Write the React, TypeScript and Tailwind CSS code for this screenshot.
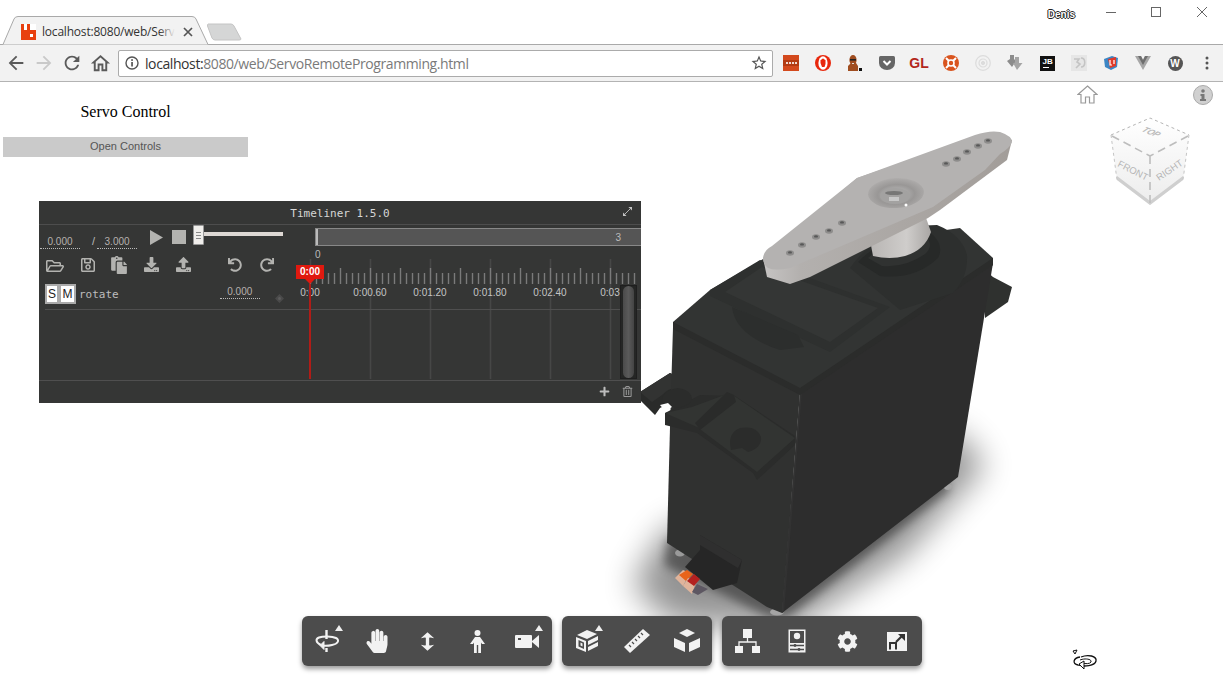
import React from "react";
import { FaRegFolderOpen, FaRegSave, FaPaste, FaDownload, FaUpload, FaUndo, FaRedo, FaPlus, FaRegTrashAlt, FaHandPaper, FaCog } from "react-icons/fa";

const Mat = ({ d, size = 22, fill = "#5a5a5a" }: { d: string; size?: number; fill?: string }) => (
  <svg width={size} height={size} viewBox="0 0 24 24" fill={fill}><path d={d} /></svg>
);

const BACK = "M20 11H7.83l5.59-5.59L12 4l-8 8 8 8 1.41-1.41L7.83 13H20v-2z";
const FWD = "M4 11h12.17l-5.59-5.59L12 4l8 8-8 8-1.41-1.41L16.17 13H4v-2z";
const RELOAD = "M17.65 6.35C16.2 4.9 14.21 4 12 4c-4.42 0-7.99 3.58-7.99 8s3.57 8 7.99 8c3.73 0 6.84-2.55 7.73-6h-2.08c-.82 2.33-3.04 4-5.65 4-3.31 0-6-2.69-6-6s2.69-6 6-6c1.66 0 3.14.69 4.22 1.78L13 11h7V4l-2.35 2.35z";
const HOME = "M12 5.69l5 4.5V18h-2v-6H9v6H7v-7.81l5-4.5M12 3L2 12h3v8h6v-6h2v6h6v-8h3L12 3z";
const STAR = "M22 9.24l-7.19-.62L12 2 9.19 8.63 2 9.24l5.46 4.73L5.82 21 12 17.27 18.18 21l-1.63-7.03L22 9.24zM12 15.4l-3.76 2.27 1-4.28-3.32-2.88 4.38-.38L12 6.1l1.71 4.04 4.38.38-3.32 2.88 1 4.28L12 15.4z";

function TabStrip() {
  return (
    <div className="h-[45px] border-b border-[#a9a9a9] flex items-end relative bg-white shrink-0">
      <div className="relative w-[211px] h-[29px] -mb-px flex items-center pl-[21px] pt-[2px]">
        <svg className="absolute inset-0" width="211" height="29" viewBox="0 0 211 29">
          <path d="M0 28.5 H3 L14 3 Q15 0.5 18 0.5 H192 Q195 0.5 196 3 L208 28.5 H211" fill="#f2f2f2" stroke="#a9a9a9" />
        </svg>
        <svg className="relative shrink-0" width="15" height="16" viewBox="0 0 15 16">
          <rect width="15" height="16" fill="#e8400f" />
          <rect x="3" y="0" width="3" height="6" fill="#fff" />
          <rect x="9" y="0" width="6" height="6" fill="#fff" />
          <rect x="9" y="10" width="3" height="3" fill="#fff" />
        </svg>
        <div className="relative ml-[6px] w-[133px] overflow-hidden whitespace-nowrap text-[12px] text-[#333] [font-family:'Open_Sans',sans-serif] tracking-[-0.2px]">
          localhost:8080/web/Servo
          <div className="absolute right-0 top-0 bottom-0 w-[16px] bg-gradient-to-r from-transparent to-[#f2f2f2]" />
        </div>
        <svg className="relative ml-[8px]" width="10" height="10" viewBox="0 0 10 10"><path d="M1 1L9 9M9 1L1 9" stroke="#555" strokeWidth="1.7" /></svg>
      </div>
      <svg className="-ml-[4px] mb-[3px]" width="36" height="18" viewBox="0 0 36 18">
        <path d="M1 1 H24 Q26 1 27 3 L34 16 Q34 17 32 17 H8 Q6 17 5 15 L0.5 3 Q0.5 1 1 1Z" fill="#d5d6d6" stroke="#c4c4c4" />
      </svg>
      <div className="absolute right-0 top-0 flex items-start">
        <span className="absolute right-[148px] top-[7px] text-[10px] font-bold text-white [font-family:'Liberation_Sans',sans-serif] [text-shadow:1px_0_0_#222,-1px_0_0_#222,0_1px_0_#222,0_-1px_0_#222]">Denis</span>
        <svg width="165" height="24" viewBox="0 0 165 24" fill="none" stroke="#666">
          <path d="M48 12.5 H58" />
          <rect x="93.5" y="7.5" width="9" height="9" />
          <path d="M139 7 L149 17 M149 7 L139 17" />
        </svg>
      </div>
    </div>
  );
}

function Extensions() {
  const items: React.ReactNode[] = [
    <svg width="16" height="16" viewBox="0 0 16 16"><rect width="16" height="16" fill="#d3491d" /><rect y="5" width="16" height="6" fill="#b33a12" /><circle cx="4" cy="8" r="1.1" fill="#fff" /><circle cx="7" cy="8" r="1.1" fill="#fff" /><circle cx="10" cy="8" r="1.1" fill="#fff" /><circle cx="13" cy="8" r="1.1" fill="#fff" /></svg>,
    <svg width="16" height="16" viewBox="0 0 16 16"><circle cx="8" cy="8" r="8" fill="#e8280d" /><ellipse cx="8" cy="8" rx="4.6" ry="6.8" fill="#fff" /><path d="M5.5 8V5h1V4h1v-.5h1V4h1v1h1v4l-1 3H7z" fill="#e8280d" /></svg>,
    <svg width="14" height="16" viewBox="0 0 14 16"><ellipse cx="5" cy="5" rx="3.6" ry="5" fill="#a04d20" /><path d="M0 16V11L3 8H8L10 11V16Z" fill="#a04d20" /><rect x="2" y="4" width="6" height="1.6" fill="#222" /><rect x="4" y="8" width="2" height="1" fill="#ddd" /><rect x="11" y="13" width="3" height="3" fill="#111" /></svg>,
    <svg width="16" height="14" viewBox="0 0 16 14"><path d="M0 1.5Q0 0 1.5 0H14.5Q16 0 16 1.5V7A8 7 0 0 1 0 7Z" fill="#666" /><path d="M4.5 5L8 8.5 11.5 5" stroke="#fff" strokeWidth="2" fill="none" /></svg>,
    <span className="text-[14px] leading-none font-bold text-[#b3261c] [font-family:'Liberation_Sans',sans-serif]">GL</span>,
    <svg width="16" height="16" viewBox="0 0 16 16"><circle cx="8" cy="8" r="8" fill="#d9541e" /><circle cx="8" cy="8" r="3" fill="none" stroke="#fff" strokeWidth="1.6" /><path d="M3 3L6 6M13 3L10 6M3 13L6 10M13 13L10 10" stroke="#fff" strokeWidth="2" /></svg>,
    <svg width="16" height="16" viewBox="0 0 16 16" fill="none" stroke="#dcdcdc"><circle cx="8" cy="8" r="7.3" strokeWidth="1.2" /><circle cx="8" cy="8" r="4" strokeWidth="1.2" /><circle cx="8" cy="8" r="1.6" fill="#dcdcdc" /></svg>,
    <svg width="16" height="16" viewBox="0 0 16 16" fill="#8c8c8c"><path d="M0 6L3 4V0H7V4L9 6 5 12Z" /><path d="M6 8H8V2H12V8H15.5L10 15Z" fill="#a5a5a5" /></svg>,
    <div className="w-[15px] h-[15px] bg-[#111] text-white text-[8px] leading-[9px] font-bold pl-[3px] pt-[1px] [font-family:'Liberation_Sans',sans-serif]">JB<div className="w-[6px] h-px bg-white mt-[1px]" /></div>,
    <svg width="16" height="16" viewBox="0 0 16 16"><rect width="16" height="16" fill="#e6e6e6" /><path d="M3 4H8L6 7 9 9 5 13M10 3C15 3 15 12 10 12" fill="none" stroke="#c4c4c4" strokeWidth="1.6" /></svg>,
    <svg width="16" height="16" viewBox="0 0 16 16"><path d="M1 4L9 1 15 3 14 12 8 15 2 12Z" fill="#3d86c4" /><path d="M5 4L13 2 13 11 7 13Z" fill="#e03a2a" /><path d="M7 5V10H9M11 5V9" stroke="#fff" strokeWidth="1.2" fill="none" /></svg>,
    <svg width="16" height="14" viewBox="0 0 16 14"><path d="M0 0H6L8 4 10 0H16L8 14Z" fill="#a7a7a7" /><path d="M3 0H6L8 4 10 0H13L8 9Z" fill="#6f6f6f" /></svg>,
    <div className="w-[15px] h-[15px] rounded-full bg-[#555] text-white text-[10px] leading-[15px] text-center font-bold [font-family:'Liberation_Sans',sans-serif]">W</div>,
  ];
  return (
    <div className="flex items-center ml-[2px]">
      {items.map((it, i) => (
        <div key={i} className="w-[32px] h-[20px] flex items-center justify-center">{it}</div>
      ))}
      <svg className="ml-[14px]" width="4" height="14" viewBox="0 0 4 14" fill="#555"><circle cx="2" cy="2" r="1.5" /><circle cx="2" cy="7" r="1.5" /><circle cx="2" cy="12" r="1.5" /></svg>
    </div>
  );
}

function Toolbar() {
  return (
    <div className="h-[37px] bg-[#f2f2f2] border-b border-[#b3b3b3] flex items-center shrink-0">
      <div className="flex items-center w-[118px] pl-[5px]">
        <div className="w-[28px] flex justify-center -ml-[3px]"><Mat d={BACK} /></div>
        <div className="w-[28px] flex justify-center"><Mat d={FWD} fill="#c9c9c9" /></div>
        <div className="w-[28px] flex justify-center"><Mat d={RELOAD} /></div>
        <div className="w-[28px] flex justify-center"><Mat d={HOME} size={23} /></div>
      </div>
      <div className="w-[655px] h-[27px] bg-white border border-[#ababab] rounded-[2px] flex items-center pl-[6px] pr-[4px]">
        <svg width="14" height="14" viewBox="0 0 14 14" fill="none"><circle cx="7" cy="7" r="6" stroke="#555" strokeWidth="1.4" /><rect x="6.2" y="6" width="1.7" height="4.5" fill="#555" /><rect x="6.2" y="3.2" width="1.7" height="1.7" fill="#555" /></svg>
        <span className="ml-[6px] text-[14px] text-[#7a7a7a] whitespace-nowrap [font-family:'Open_Sans',sans-serif] tracking-[-0.41px]"><span className="text-[#333]">localhost:</span>8080/web/ServoRemoteProgramming.html</span>
        <div className="ml-auto"><Mat d={STAR} size={18} fill="#555" /></div>
      </div>
      <Extensions />
    </div>
  );
}

function Model() {
  return (
    <svg className="absolute inset-0" width="1223" height="593" viewBox="0 82 1223 593">
      <defs>
        <filter id="blur1" x="-30%" y="-30%" width="160%" height="160%"><feGaussianBlur stdDeviation="16" /></filter>
        <filter id="blur2" x="-30%" y="-30%" width="160%" height="160%"><feGaussianBlur stdDeviation="5" /></filter>
        <linearGradient id="hornSide" x1="0" x2="1" y1="0" y2="0">
          <stop offset="0" stopColor="#c6c4c3" /><stop offset="0.15" stopColor="#b3b0ae" /><stop offset="1" stopColor="#a29d99" />
        </linearGradient>
        <radialGradient id="hole" cx="0.5" cy="0.55" r="0.55">
          <stop offset="0" stopColor="#c4c4c4" /><stop offset="0.6" stopColor="#999796" /><stop offset="0.9" stopColor="#a9a7a6" /><stop offset="1" stopColor="#b0aead" />
        </radialGradient>
        <linearGradient id="neck" x1="0" x2="1" y1="0" y2="0">
          <stop offset="0" stopColor="#b8b5b3" /><stop offset="0.6" stopColor="#cfcdcb" /><stop offset="1" stopColor="#a9a6a4" />
        </linearGradient>
      </defs>
      {/* ground shadow */}
      <path d="M665 530 L632 585 L670 622 L790 630 L905 555 L985 465 L955 430 Z" fill="#000" opacity="0.42" filter="url(#blur1)" />
      <path d="M667 540 L664 565 L770 618 L790 616 L950 490 L940 470 Z" fill="#000" opacity="0.4" filter="url(#blur2)" />
      {/* feet */}
      <ellipse cx="680" cy="553" rx="5" ry="3.5" fill="#9a9a9a" />
      <ellipse cx="777" cy="612" rx="7" ry="3.5" fill="#a5a5a5" />
      <ellipse cx="948" cy="487" rx="4" ry="3" fill="#a5a5a5" />
      {/* right flange */}
      <path d="M985 270 L993 277 L1012 287 L1008 302 L985 318 Z" fill="#2f312f" />
      {/* left flange A */}
      <path d="M670 373 L640 392 L640 400 L655 415 L660 408 L668 404 Q680 414 692 402 L705 390 Z" fill="#2a2b2a" />
      <path d="M670 373 L640 392 L652 402 L662 395 Q672 384 685 390 Q692 394 692 400 L705 390 Z" fill="#323332" />
      {/* left face */}
      <path d="M673 327 L800 393 L782 613 L767 607 L667 543 L670 427 Z" fill="#303130" />
      {/* right face */}
      <path d="M800 393 L993 263 L958 477 L782 613 Z" fill="#2d2d2d" />
      <path d="M800 393 L782 613 L784 612 L802 392 Z" fill="#323232" />
      {/* top */}
      <path d="M673 322 L710 290 L770 255 L960 228 L993 258 L993 265 L800 393 L673 327 Z" fill="#323433" />
      <path d="M673 322 L800 388 L993 258 L993 265 L800 395 L673 329 Z" fill="#2b2c2b" />
      {/* recess */}
      <path d="M710 290 L760 260 L890 307 L830 352 L710 296 Z" fill="#2e302f" />
      <path d="M725 292 L762 267 L878 308 L830 342 Z" fill="#343635" />
      <path d="M732 307 Q735 335 780 350 L804 347 L798 335 Z" fill="#2c2e2d" />
      {/* turret */}
      <path d="M850 268 Q880 225 937 225 Q962 235 967 255 Q968 278 953 293 L900 310 Z" fill="#2d2f2e" />
      <path d="M858 262 Q880 238 930 232 Q945 245 938 258 Q915 280 880 276 Z" fill="#272928" />
      <path d="M868 258 Q890 240 925 236 Q935 245 925 254 Q905 268 882 266 Z" fill="#303231" />
      <path d="M873 256 L870 240 L925 215 L931 232 Q925 250 905 256 Q890 260 873 256 Z" fill="url(#neck)" />
      {/* left flange B */}
      <path d="M665 413 L665 425 L697 433 L753 473 L757 480 L795 445 L795 436 L735 396 L700 395 Z" fill="#2b2c2b" />
      <path d="M665 413 L692 407 L730 393 L795 438 L757 472 L697 427 Z" fill="#323432" />
      <path d="M695 423 L727 392 L734 395 L736 402 L700 430 Z" fill="#2a2b2a" />
      <path d="M731 450 Q727 433 740 428 Q757 425 761 437 Q762 448 748 452 L742 448 Z" fill="#2b2c2b" />
      <path d="M662 402 Q662 390 678 388 Q692 390 692 400 Q686 408 675 408 Z" fill="#2b2c2b" />
      <path d="M660 405 L668 403 L672 407 L665 411 Z" fill="#ffffff" />
      {/* connector */}
      <path d="M700 535 L742 560 L737 583 L713 590 L685 567 L700 550 Z" fill="#262626" />
      <path d="M700 535 L742 560 L738 568 L700 545 Z" fill="#2f2f2f" />
      <path d="M675 578 L683 570 L690 573 L683 586 Z" fill="#e0b49b" />
      <path d="M679 575 L687 570 L693 574 L686 581 Z" fill="#e8641a" />
      <path d="M683 586 L688 578 L696 582 L692 594 Z" fill="#e0b49b" />
      <path d="M687 581 L694 574 L700 579 L694 586 Z" fill="#b3201f" />
      <path d="M692 592 L697 584 L708 589 L698 595 Z" fill="#5d5762" />
      {/* horn */}
      <path d="M763 258 L767 277 L790 284 L810 277 L928 218 L940 210 L1007 160 L1012 140 L993 132 L857 178 Z" fill="url(#hornSide)" />
      <path d="M763 258 Q764 250 772 246 L857 178 L975 135 Q990 130 1000 132 Q1012 136 1012 142 Q1010 148 1000 154 L985 170 L933 207 L790 268 Q775 271 768 268 Q763 264 763 258 Z" fill="#b4b2b1" />
      <ellipse cx="896" cy="193" rx="28" ry="15" transform="rotate(-3 896 193)" fill="url(#hole)" />
      <ellipse cx="895" cy="196" rx="15" ry="8" fill="#a3a2a1" />
      <ellipse cx="894" cy="193" rx="9" ry="2" fill="#5a5a5a" opacity="0.6" />
      <rect x="889" y="197" width="10" height="4" fill="#c8c8c8" />
      <circle cx="906" cy="205" r="1.5" fill="#fff" />
      {[[790, 253], [802, 245], [816, 237], [829, 231], [842, 223], [946, 164], [957, 159], [967, 152], [978, 146], [988, 141]].map(([x, y], i) => (
        <g key={i}>
          <ellipse cx={x} cy={y} rx="4" ry="2.8" fill="#8e8d8c" />
          <ellipse cx={x} cy={y - 0.6} rx="2" ry="1.2" fill="#585858" />
        </g>
      ))}
    </svg>
  );
}

function ViewCube() {
  return (
    <svg className="absolute right-[28px] top-[33px]" width="90" height="95" viewBox="1105 115 90 95">
      <defs>
        <linearGradient id="cf" x1="0" y1="0" x2="0" y2="1"><stop offset="0" stopColor="#ffffff" /><stop offset="1" stopColor="#ececec" /></linearGradient>
      </defs>
      <path d="M1111 135 L1150 118 L1189 135 L1183 180 L1150 205 L1117 180 Z" fill="url(#cf)" />
      <path d="M1117 180 L1150 205 L1183 180 L1183 176 L1150 201 L1117 176Z" fill="#cfcfcf" />
      <path d="M1111 135 L1150 118 L1189 135" fill="none" stroke="#b5b5b5" strokeDasharray="3 3" />
      <path d="M1111 135 L1117 180 M1189 135 L1183 180" fill="none" stroke="#c5c5c5" strokeDasharray="3 3" />
      <path d="M1112 136 L1150 156 L1188 136 M1150 156 V205" fill="none" stroke="#bdbdbd" strokeWidth="1.6" strokeDasharray="8 5" />
      <text transform="translate(1141 131) rotate(22) skewX(-25)" fontSize="8.5" fontWeight="bold" fontStyle="italic" fill="#bbb" fontFamily="Liberation Sans">TOP</text>
      <text transform="translate(1117 166) rotate(27)" fontSize="9.5" fill="#b5b5b5" fontFamily="Liberation Sans">FRONT</text>
      <text transform="translate(1159 181) rotate(-34)" fontSize="9.5" fill="#b5b5b5" fontFamily="Liberation Sans">RIGHT</text>
    </svg>
  );
}

const Num = ({ v, className = "" }: { v: string; className?: string }) => (
  <div className={"w-[40px] text-center border-b border-dotted border-[#bbb] text-[10px] leading-[12px] text-[#b5b0ad] [font-family:'Liberation_Sans',sans-serif] " + className}>{v}</div>
);

function Timeliner() {
  const ticks = Array.from({ length: 55 }, (_, i) => 14 + i * 6);
  const labels: [string, number][] = [["0:00", 14], ["0:00.60", 74], ["0:01.20", 134], ["0:01.80", 194], ["0:02.40", 254], ["0:03", 314]];
  return (
    <div className="absolute left-[39px] top-[119px] w-[602px] h-[202px] bg-[#353635] flex flex-col text-[#bbb]">
      <div className="h-[24px] border-b border-[#4d4d4d] relative flex items-center justify-center pt-[4px] shrink-0">
        <span className="text-[11px] text-[#d6d6d6] [font-family:'DejaVu_Sans_Mono',monospace]">Timeliner 1.5.0</span>
        <svg className="absolute right-[9px] top-[6px]" width="9" height="9" viewBox="0 0 10 10" fill="none" stroke="#c4c4c4"><path d="M2 8L8 2" /><path d="M6 0H10V4Z" fill="#c4c4c4" stroke="none" /><path d="M0 6V10H4Z" fill="#c4c4c4" stroke="none" /></svg>
      </div>
      <div className="h-[155px] flex shrink-0">
        <div className="w-[257px] shrink-0 flex flex-col">
          <div className="h-[25px] flex items-start pl-[1px] relative">
            <Num v="0.000" className="mt-[11px]" />
            <span className="ml-[12px] mt-[10px] text-[11px] leading-[12px] text-[#bbb] [font-family:'Liberation_Sans',sans-serif]">/</span>
            <Num v="3.000" className="ml-[2px] mt-[11px]" />
            <svg className="ml-[13px] mt-[5px]" width="13" height="15" viewBox="0 0 13 15" fill="#b3b3b0"><path d="M0 0L13 7.5 0 15Z" /></svg>
            <div className="ml-[9px] mt-[5px] w-[14px] h-[14px] bg-[#b3b3b0]" />
            <div className="ml-[7px] w-[11px] h-[20px] bg-[#f0eeeb] border border-[#999] rounded-[1px] flex flex-col gap-[2px] items-center justify-center">
              <div className="w-[5px] h-px bg-[#888]" /><div className="w-[5px] h-px bg-[#888]" /><div className="w-[5px] h-px bg-[#888]" />
            </div>
            <div className="w-[79px] h-[4px] mt-[7px] bg-[#ddd8d4]" />
          </div>
          <div className="h-[34px] pt-[7px] pl-[7px] flex items-start text-[#b3b3b0]">
            <div className="w-[32px]"><FaRegFolderOpen size={18} /></div>
            <div className="w-[32px] pl-[2px]"><FaRegSave size={16} /></div>
            <div className="w-[32px]"><FaPaste size={18} className="-mt-[1px]" /></div>
            <div className="w-[32px] pl-[2px]"><FaDownload size={15} /></div>
            <div className="w-[52px] pl-[2px]"><FaUpload size={15} /></div>
            <div className="w-[32px] pl-[2px]"><FaUndo size={14} className="mt-[1px]" /></div>
            <div className="pl-[2px]"><FaRedo size={14} className="mt-[1px]" /></div>
          </div>
          <div className="h-[26px] ml-[6px] border-b border-[#4f4f4f] flex items-start">
            <div className="w-[14px] h-[20px] bg-white border-2 border-[#aaa] text-[#222] text-[12px] leading-[16px] text-center [font-family:'Liberation_Sans',sans-serif]">S</div>
            <div className="w-[17px] h-[20px] bg-white border-2 border-[#aaa] text-[#222] text-[12px] leading-[16px] text-center [font-family:'Liberation_Sans',sans-serif]">M</div>
            <span className="ml-[3px] mt-[4px] text-[11px] leading-[14px] text-[#bdbdbd] [font-family:'DejaVu_Sans_Mono',monospace]">rotate</span>
            <Num v="0.000" className="ml-[101px] mt-[2px]" />
            <svg className="ml-[15px] mt-[10px]" width="9" height="9" viewBox="0 0 9 9"><path d="M4.5 0L9 4.5 4.5 9 0 4.5Z" fill="#4a4a4a" /><circle cx="4.5" cy="4.5" r="1.5" fill="#5d5d5d" /></svg>
          </div>
          <div className="flex-1" />
        </div>
        <div className="flex-1 relative">
          <svg className="absolute inset-0" width="345" height="155" viewBox="0 0 345 155">
            {[74, 134, 194, 254, 314].map((x) => (
              <line key={x} x1={x + 0.5} x2={x + 0.5} y1="34" y2="154" stroke="#464746" strokeWidth="1.6" />
            ))}
            <line x1="14.5" x2="14.5" y1="34" y2="44" stroke="#484948" strokeWidth="1.6" />
            {ticks.map((x, i) => (
              <line key={x} x1={x + 0.5} x2={x + 0.5} y1={i % 5 === 0 ? 43 : 48} y2="59" stroke="#7a7a7a" strokeWidth="1.4" />
            ))}
            <line x1="0" x2="345" y1="84.5" y2="84.5" stroke="#4f4f4f" />
          </svg>
          <div className="absolute left-[19px] right-0 top-[3px] h-[18px] bg-[#555] border-y border-l border-[#888] text-[10px] text-[#bbb] [font-family:'Liberation_Sans',sans-serif]">
            <div className="absolute left-0 top-0 bottom-0 w-[2px] bg-[#bbb]" />
            <span className="absolute right-[20px] top-[2px] leading-[14px]">3</span>
          </div>
          <span className="absolute left-[19px] top-[24px] text-[10px] leading-[12px] text-[#bbb] [font-family:'Liberation_Sans',sans-serif]">0</span>
          {labels.map(([t, x]) => (
            <span key={t} className="absolute top-[62px] -translate-x-1/2 text-[10px] leading-[12px] text-[#c4c4c4] [font-family:'Liberation_Sans',sans-serif]" style={{ left: x }}>{t}</span>
          ))}
          <div className="absolute left-[13px] top-[59px] w-[2px] h-[95px] bg-[#b01c17]" />
          <div className="absolute left-0 top-[40px] w-[28px] h-[14px] bg-[#e0190f] text-white text-[10px] font-bold leading-[14px] text-center [font-family:'Liberation_Sans',sans-serif]">0:00</div>
          <div className="absolute left-[9px] top-[54px] w-0 h-0 border-x-[5px] border-x-transparent border-t-[5px] border-t-[#e0190f]" />
          <div className="absolute left-[324px] top-[60px] w-[17px] h-[94px] bg-[#252625] border border-[#1f1f1f] flex justify-center">
            <div className="w-[11px] h-full rounded-full bg-gradient-to-r from-[#4a4a4a] via-[#5a5a5a] to-[#444]" />
          </div>
        </div>
      </div>
      <div className="flex-1 border-t border-[#4f4f4f] flex items-center justify-end pr-[8px] pb-[2px] gap-[12px] text-[#bdbdbd]">
        <FaPlus size={11} />
        <FaRegTrashAlt size={11} className="text-[#999]" />
      </div>
    </div>
  );
}

const Caret = () => <div className="absolute right-[9px] top-[9px] w-0 h-0 border-x-[4px] border-x-transparent border-b-[6px] border-b-[#eee]" />;

function Btn({ children, caret }: { children: React.ReactNode; caret?: boolean }) {
  return (
    <div className="w-[50px] h-[50px] relative flex items-center justify-center text-[#f2f2f2]">
      {children}
      {caret && <Caret />}
    </div>
  );
}

function BottomBar() {
  const group = "h-[50px] bg-[#4c4c4c] rounded-[6px] flex shadow-[0_3px_5px_rgba(0,0,0,0.4)]";
  return (
    <div className="absolute left-[302px] bottom-[9px] flex gap-[10px]">
      <div className={group}>
        <Btn caret>
          <svg width="26" height="26" viewBox="0 0 26 26" fill="none" stroke="#f2f2f2"><path d="M12.5 2V11M12.5 20V24" strokeWidth="2.4" /><path d="M7 17C2 15 1 11 5 9.5 9 8 18 8 22 10 26 12 24 16 18 17 14 18 11 18 8 17.5" strokeWidth="2" /><path d="M10 13.5L6 17.5 10 21.5Z" fill="#f2f2f2" /></svg>
        </Btn>
        <Btn><FaHandPaper size={24} /></Btn>
        <Btn>
          <svg width="15" height="19" viewBox="0 0 18 22" fill="#f2f2f2"><path d="M9 0L17 7Q12 6 11 6.5V15.5Q12 16 17 15L9 22 1 15Q6 16 7 15.5V6.5Q6 6 1 7Z" /></svg>
        </Btn>
        <Btn>
          <svg width="15" height="23" viewBox="0 0 15 23" fill="#f2f2f2"><circle cx="7.5" cy="3" r="3" /><path d="M5 7H10L15 14H12L11 12.5V23H8.2V15H6.8V23H4V12.5L3 14H0Z" /></svg>
        </Btn>
        <Btn caret>
          <svg width="24" height="13" viewBox="0 0 24 13" fill="#f2f2f2"><rect width="17" height="13" rx="1" /><rect x="3" y="3" width="3" height="2" fill="#4c4c4c" /><path d="M17 6L24 0V13L17 7Z" /></svg>
        </Btn>
      </div>
      <div className={group}>
        <Btn caret>
          <svg width="22" height="24" viewBox="0 0 22 24" fill="#f2f2f2"><path d="M11 1L21 5 11 10 1 6Z" /><path d="M0 8L10 12V23L0 19ZM2.5 11V17.5L8 20V13.5ZM4.5 13.5L6.5 14.5V17.5L4.5 16.5Z" fillRule="evenodd" /><path d="M12 12L22 7V11L12 16ZM12 18L22 13V17L12 22Z" /></svg>
        </Btn>
        <Btn>
          <svg width="26" height="24" viewBox="0 0 26 24"><path d="M19 0L26 6 6 24 0 18Z" fill="#f2f2f2" /><path d="M17 4L19 6M14 7L16 9M11 10L13 12M8 13L10 15M5 16L7 18" stroke="#4c4c4c" strokeWidth="1.2" /></svg>
        </Btn>
        <Btn>
          <svg width="26" height="24" viewBox="0 0 26 24" fill="#f2f2f2"><path d="M13 0L21 4 13 8 5 4Z" /><path d="M0 9L11 14V23L0 18ZM26 9L15 14V23L26 18Z" /></svg>
        </Btn>
      </div>
      <div className={group}>
        <Btn>
          <svg width="25" height="24" viewBox="0 0 25 24" fill="#f2f2f2"><rect x="8" y="0" width="9" height="9" /><path d="M12.5 9V13M4 18V13H21V18" stroke="#f2f2f2" fill="none" strokeWidth="1.3" /><rect x="0" y="17" width="8" height="7" /><rect x="17" y="17" width="8" height="7" /></svg>
        </Btn>
        <Btn>
          <svg width="18" height="24" viewBox="0 0 18 24"><rect x="0.5" y="0.5" width="17" height="23" fill="#f2f2f2" /><rect x="2" y="2" width="14" height="12" fill="#4c4c4c" /><circle cx="9" cy="7" r="3.2" fill="#f2f2f2" /><path d="M2 16.5H16M2 20.5H16" stroke="#4c4c4c" strokeWidth="1.5" /><circle cx="7" cy="16.5" r="1.4" fill="#4c4c4c" /><circle cx="11" cy="20.5" r="1.4" fill="#4c4c4c" /></svg>
        </Btn>
        <Btn><FaCog size={21} /></Btn>
        <Btn>
          <svg width="20" height="19" viewBox="0 0 20 19"><rect width="20" height="19" fill="#f2f2f2" /><path d="M3 17.5V11H9V17.5" fill="none" stroke="#333" strokeWidth="2" /><path d="M9 10L15 4" stroke="#333" strokeWidth="2.2" /><path d="M11 2H18V9Z" fill="#333" /></svg>
        </Btn>
      </div>
    </div>
  );
}

export default function App() {
  return (
    <div className="w-[1223px] h-[675px] overflow-hidden bg-white flex flex-col">
      <TabStrip />
      <Toolbar />
      <div className="flex-1 relative">
        <Model />
        <div className="relative w-[245px] ml-[3px]">
          <div className="pt-[20px] h-[55px] text-center text-[16px] leading-[19px] text-black [font-family:'Liberation_Serif',serif]">Servo Control</div>
          <div className="h-[20px] bg-[#cacaca] text-center text-[11px] leading-[19px] text-[#555] [font-family:'Liberation_Sans',sans-serif]">Open Controls</div>
        </div>
        <div className="absolute left-[1077px] top-[3px]">
          <svg width="21" height="19" viewBox="0 0 21 19" fill="#fff" stroke="#999" strokeWidth="1.2"><path d="M10.5 1L20 9.5H17V18H12.5V12H8.5V18H4V9.5H1Z" /></svg>
        </div>
        <div className="absolute left-[1193px] top-[3px] w-[20px] h-[20px] rounded-full bg-[#d0d0d0] border border-[#aaa] flex items-center justify-center">
          <svg width="8" height="12" viewBox="0 0 8 12" fill="#777"><circle cx="4" cy="2" r="1.8" /><path d="M1.5 5H5.5V10H7V12H1V10H2.5V7H1.5Z" /></svg>
        </div>
        <ViewCube />
        <Timeliner />
        <BottomBar />
        <svg className="absolute left-[1070px] top-[566px]" width="30" height="26" viewBox="0 0 30 26" fill="none" stroke="#111">
          <path d="M3 3L7 2 5 6Z" fill="#fff" />
          <path d="M10 9C3 10 2 16 8 17 14 19 25 18 26 13 27 8 18 6 11 9" strokeWidth="1.3" />
          <path d="M10 12C15 10 22 11 21 14 20 16 15 16 13 15" />
          <path d="M14 13L9 16 14 21Z" fill="#fff" />
        </svg>
      </div>
    </div>
  );
}
